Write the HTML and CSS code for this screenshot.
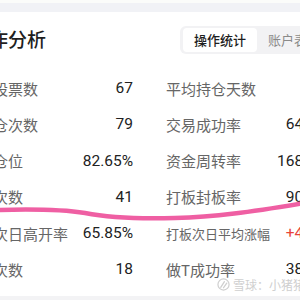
FILE: index.html
```html
<!DOCTYPE html>
<html lang="zh-CN">
<head>
    <meta charset="UTF-8">
    <meta name="viewport" content="width=device-width, initial-scale=1.0">
    <title>操作分析</title>
    <link rel="stylesheet" href="styles.css">
</head>
<body>
    <div class="page">
        <div class="top-strip"></div>

        <div class="header">
            <h1 class="title">操作分析</h1>
            <div class="tabs">
                <div class="tab active">操作统计</div>
                <div class="tab">账户表现</div>
            </div>
        </div>

        <!-- Stats grid -->
        <div class="stats">
            <div class="stat"><span class="label">交易股票数</span><span class="value">67</span></div>
            <div class="stat"><span class="label">平均持仓天数</span><span class="value">3.2</span></div>

            <div class="stat"><span class="label">总建仓次数</span><span class="value">79</span></div>
            <div class="stat"><span class="label">交易成功率</span><span class="value">64.56%</span></div>

            <div class="stat"><span class="label">平均仓位</span><span class="value">82.65%</span></div>
            <div class="stat"><span class="label">资金周转率</span><span class="value">168.52%</span></div>

            <div class="stat"><span class="label">打板次数</span><span class="value">41</span></div>
            <div class="stat"><span class="label">打板封板率</span><span class="value">90.24%</span></div>

            <div class="stat"><span class="label">打板次日高开率</span><span class="value">65.85%</span></div>
            <div class="stat"><span class="label small">打板次日平均涨幅</span><span class="value up">+4.87%</span></div>

            <div class="stat"><span class="label">回转次数</span><span class="value">18</span></div>
            <div class="stat"><span class="label">做T成功率</span><span class="value">38.89%</span></div>
        </div>

        <div class="bottom-strip"></div>
    </div>

    <div class="watermark">
        <svg width="13" height="13" viewBox="0 0 14 14">
            <circle cx="7" cy="7" r="6" fill="none" stroke="#cfcfcf" stroke-width="1.3"/>
            <path d="M4 10 L8 4 M7 10.5 L10.5 5.5" stroke="#cfcfcf" stroke-width="1.4" fill="none" stroke-linecap="round"/>
        </svg>
        <span>雪球：小猪猪</span>
    </div>

    <svg class="scribble" width="300" height="300" viewBox="0 0 300 300">
        <path d="M-4 210 C 30 209, 60 209, 85 213 C 110 218, 140 219, 175 218 C 215 217, 250 212, 304 203" fill="none" stroke="#ef5fa3" stroke-width="4.5" stroke-linecap="round"/>
    </svg>
</body>
</html>
```

FILE: styles.css
```css
* {
    margin: 0;
    padding: 0;
    box-sizing: border-box;
}

body {
    width: 300px;
    height: 300px;
    overflow: hidden;
    background: #ffffff;
    font-family: Roboto, "Noto Sans CJK SC", sans-serif;
    color: #222;
    position: relative;
}

.page {
    height: 300px;
    display: flex;
    flex-direction: column;
}

.top-strip {
    height: 12px;
    border-top: 3px solid #fbfcfa;
    background: #f1f2f6;
}

.header {
    display: grid;
    grid-template-columns: 180px auto;
    align-items: center;
    height: 28px;
    margin-top: 13px;
    white-space: nowrap;
}

.title {
    font-family: "Noto Sans CJK SC", sans-serif;
    font-size: 19px;
    font-weight: 500;
    color: #1f1f1f;
    margin-left: -30px;
    margin-bottom: 3px;
}

.tabs {
    display: flex;
    height: 28px;
    padding: 2px 3px;
    background: #f2f2f4;
    border-radius: 6px;
    width: 200px;
}

.tab {
    font-family: "Noto Sans CJK SC", sans-serif;
    font-size: 13px;
    line-height: 24px;
    padding: 0 11px;
    color: #8a8a8a;
    border-radius: 4px;
}

.tab.active {
    background: #ffffff;
    color: #1f1f1f;
    font-weight: 500;
}

.stats {
    display: grid;
    grid-template-columns: 170px 170px;
    grid-auto-rows: 36.25px;
    column-gap: 33px;
    margin-left: -37px;
    padding-top: 17px;
}

.stat {
    display: flex;
    justify-content: space-between;
    align-items: center;
    white-space: nowrap;
}

.label {
    font-family: "Noto Sans CJK SC", sans-serif;
    font-size: 15px;
    color: #666;
}

.label.small {
    font-size: 13px;
}

.value {
    font-size: 15.5px;
    color: #222;
}

.value.up {
    color: #e8443a;
}

.bottom-strip {
    margin-top: auto;
    height: 4px;
    background: #f3f3f5;
}

.watermark {
    position: absolute;
    left: 217px;
    top: 276px;
    display: flex;
    align-items: center;
    gap: 3px;
    font-family: "Noto Sans CJK SC", sans-serif;
    font-size: 12px;
    color: #cfcfcf;
    white-space: nowrap;
}

.scribble {
    position: absolute;
    left: 0;
    top: 0;
    pointer-events: none;
}
```
